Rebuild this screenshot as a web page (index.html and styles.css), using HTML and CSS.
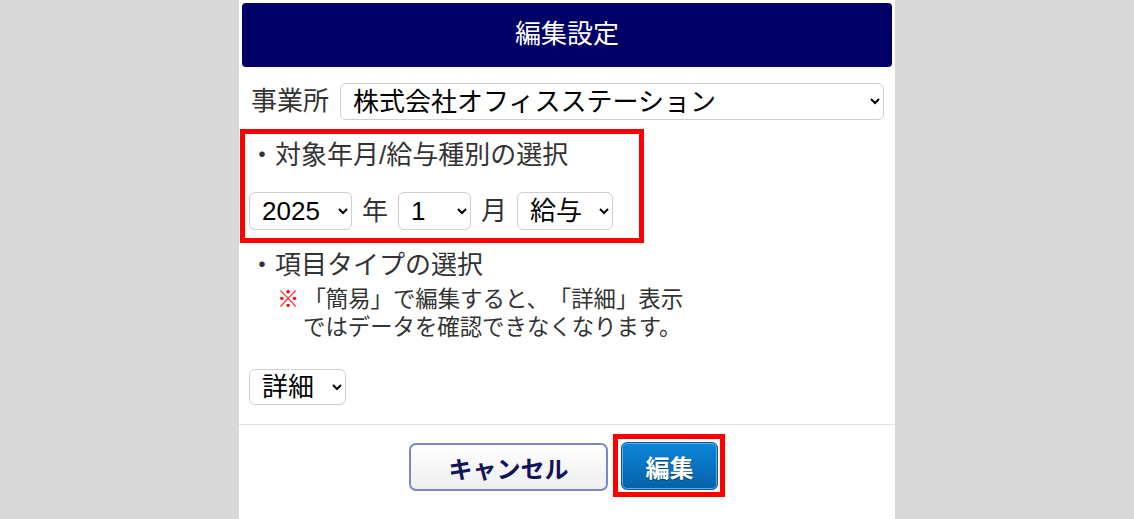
FILE: index.html
```html
<!DOCTYPE html>
<html lang="ja">
<head>
  <meta charset="UTF-8">
  <title>編集設定</title>
  <link rel="stylesheet" href="styles.css">
</head>
<body>

<div class="panel">
  <header class="title">編集設定</header>

  <div class="office-row">
    <span class="label">事業所</span>
    <select class="office-select">
      <option>株式会社オフィスステーション</option>
    </select>
  </div>

  <div class="target-box">
    <div class="heading">・対象年月/給与種別の選択</div>
    <div class="period-row">
      <select class="year-select"><option>2025</option></select>
      <span class="label">年</span>
      <select class="month-select"><option>1</option></select>
      <span class="label">月</span>
      <select class="kind-select"><option>給与</option></select>
    </div>
  </div>

  <div class="type-section">
    <div class="heading">・項目タイプの選択</div>
    <p class="note"><span class="mark">※</span>「簡易」で編集すると、「詳細」表示<br>ではデータを確認できなくなります。</p>
    <select class="type-select"><option>詳細</option></select>
  </div>

  <div class="actions">
    <button class="btn-cancel">キャンセル</button>
    <span class="highlight"><button class="btn-edit">編集</button></span>
  </div>
</div>

</body>
</html>
```

FILE: styles.css
```css
body {
  margin: 0;
  background: #d9d9d9;
  font-family: "Liberation Sans", "Noto Sans CJK JP", sans-serif;
  color: #333;
  text-spacing-trim: space-all;
}
.panel {
  width: 656px;
  min-height: 519px;
  margin: 0 auto;
  background: #fff;
  padding: 3px 3px 0 3px;
  box-sizing: border-box;
}
.title {
  height: 64px;
  line-height: 62px;
  background: #000066;
  color: #fff;
  font-size: 26px;
  text-align: center;
  border-radius: 4px;
}
select {
  font-family: "Liberation Sans", "Noto Sans CJK JP", sans-serif;
  font-size: 26px;
  color: #000;
  background: #fff;
  border: 1px solid #cfcfcf;
  border-radius: 6px;
  padding: 0 6px 0 8px;
  box-sizing: border-box;
}
.label {
  font-size: 26px;
  line-height: 37px;
}
.office-row {
  display: flex;
  align-items: center;
  gap: 11px;
  margin-top: 16px;
  padding-left: 9px;
  padding-right: 8px;
}
.office-select {
  flex: 1;
  height: 37px;
}
.target-box {
  width: 404px;
  margin-top: 9px;
  margin-left: -2px;
  border: 5px solid #ff0000;
  padding: 0 4px 8px;
  box-sizing: border-box;
}
.heading {
  font-size: 26px;
  line-height: 42px;
}
.period-row {
  display: flex;
  align-items: center;
  gap: 10px;
  margin-top: 16px;
}
.period-row select {
  height: 38px;
}
.year-select {
  width: 103px;
}
.month-select {
  width: 73px;
}
.kind-select {
  width: 96px;
}
.type-section {
  padding-left: 7px;
  margin-top: 1px;
}
.note {
  margin: 0;
  font-size: 22.4px;
  line-height: 28px;
  padding-left: 54px;
  text-indent: -26px;
}
.note .mark {
  color: #ff0000;
  font-weight: bold;
  margin-right: 4px;
}
.type-select {
  width: 97px;
  height: 36px;
  margin-top: 27px;
  margin-bottom: 19px;
}
.actions {
  display: flex;
  justify-content: center;
  align-items: center;
  gap: 5px;
  margin: 0 -3px;
  padding-top: 9px;
  border-top: 1px solid #e3e3e3;
}
.btn-cancel {
  width: 199px;
  height: 48px;
  margin-top: 3px;
  font-family: "Noto Sans CJK JP", sans-serif;
  font-size: 24px;
  font-weight: bold;
  color: #12125a;
  background: linear-gradient(#ffffff, #eeeeee);
  border: 2px solid #7b87c9;
  border-radius: 7px;
  cursor: pointer;
}
.highlight {
  display: inline-block;
  border: 5px solid #ff0000;
  padding: 3px 2px 2px 3px;
}
.btn-edit {
  display: block;
  width: 97px;
  height: 48px;
  font-family: "Noto Sans CJK JP", sans-serif;
  font-size: 24px;
  font-weight: bold;
  color: #fff;
  text-shadow: 0 1px 1px rgba(0,0,0,0.4);
  background: linear-gradient(#0b86d8, #0562a8);
  border: 1px solid #0a5a9c;
  box-shadow: inset 0 0 0 1px #5aaee8;
  border-radius: 6px;
  cursor: pointer;
}
```
